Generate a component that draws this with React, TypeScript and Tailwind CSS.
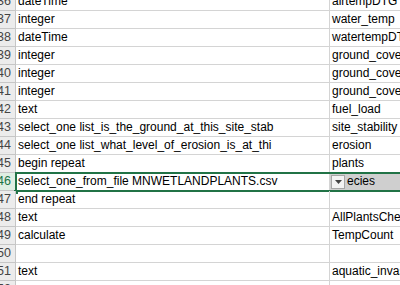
const rows: { n: number; a: string; b: string }[] = [
  { n: 36, a: 'dateTime', b: 'airtempDTG' },
  { n: 37, a: 'integer', b: 'water_temp' },
  { n: 38, a: 'dateTime', b: 'watertempDTG' },
  { n: 39, a: 'integer', b: 'ground_cover' },
  { n: 40, a: 'integer', b: 'ground_cover' },
  { n: 41, a: 'integer', b: 'ground_cover' },
  { n: 42, a: 'text', b: 'fuel_load' },
  { n: 43, a: 'select_one list_is_the_ground_at_this_site_stab', b: 'site_stability' },
  { n: 44, a: 'select_one list_what_level_of_erosion_is_at_thi', b: 'erosion' },
  { n: 45, a: 'begin repeat', b: 'plants' },
  { n: 46, a: 'select_one_from_file MNWETLANDPLANTS.csv', b: 'species' },
  { n: 47, a: 'end repeat', b: '' },
  { n: 48, a: 'text', b: 'AllPlantsChecked' },
  { n: 49, a: 'calculate', b: 'TempCount' },
  { n: 50, a: '', b: '' },
  { n: 51, a: 'text', b: 'aquatic_invasives' },
  { n: 52, a: '', b: '' },
]

const font = "font-['Liberation_Sans',Arial,sans-serif]"

function Row({ n, a, b }: { n: number; a: string; b: string }) {
  const active = n === 46
  return (
    <div className="relative flex h-[18px]">
      <div
        className={`flex w-[16px] shrink-0 justify-end overflow-hidden border-b border-r pr-[4px] text-[12.5px] leading-[17px] whitespace-nowrap ${
          active
            ? 'border-b-[#c6c6c6] border-r-[#217346] bg-[#dfeee3] text-[#217346]'
            : 'border-[#c6c6c6] bg-[#ececec] text-[#444]'
        }`}
      >
        {n}
      </div>
      <div className="w-[314px] shrink-0 overflow-hidden border-b border-r border-[#d4d4d4] pl-[2px] text-[12px] leading-[17px] whitespace-nowrap text-black">
        {a}
      </div>
      <div
        className={`flex min-w-0 flex-1 overflow-hidden border-b border-[#d4d4d4] text-[12px] leading-[17px] whitespace-nowrap text-black ${
          active ? 'bg-[#cfcfcf]' : ''
        }`}
      >
        {active ? (
          <>
            <div className="mt-[2px] ml-[1px] flex h-[14px] w-[14px] shrink-0 items-center justify-center border border-[#a6a6a6] bg-[#f3f3f3]">
              <svg width="7" height="4" viewBox="0 0 7 4">
                <path d="M0 0h7L3.5 4z" fill="#444" />
              </svg>
            </div>
            <span className="pl-[2px]">ecies</span>
          </>
        ) : (
          <span className="pl-[2px]">{b}</span>
        )}
      </div>
      {active && (
        <>
          <div className="pointer-events-none absolute -top-[1px] left-[15px] -right-[4px] bottom-[-1px] border-2 border-[#217346]" />
          <div className="absolute -bottom-[3px] left-[14px] h-[4px] w-[4px] bg-[#217346]" />
        </>
      )}
    </div>
  )
}

export default function App() {
  return (
    <div className={`h-[285px] w-[400px] overflow-hidden bg-white ${font}`}>
      <div className="-mt-[7px]">
        {rows.map((r) => (
          <Row key={r.n} {...r} />
        ))}
      </div>
    </div>
  )
}
